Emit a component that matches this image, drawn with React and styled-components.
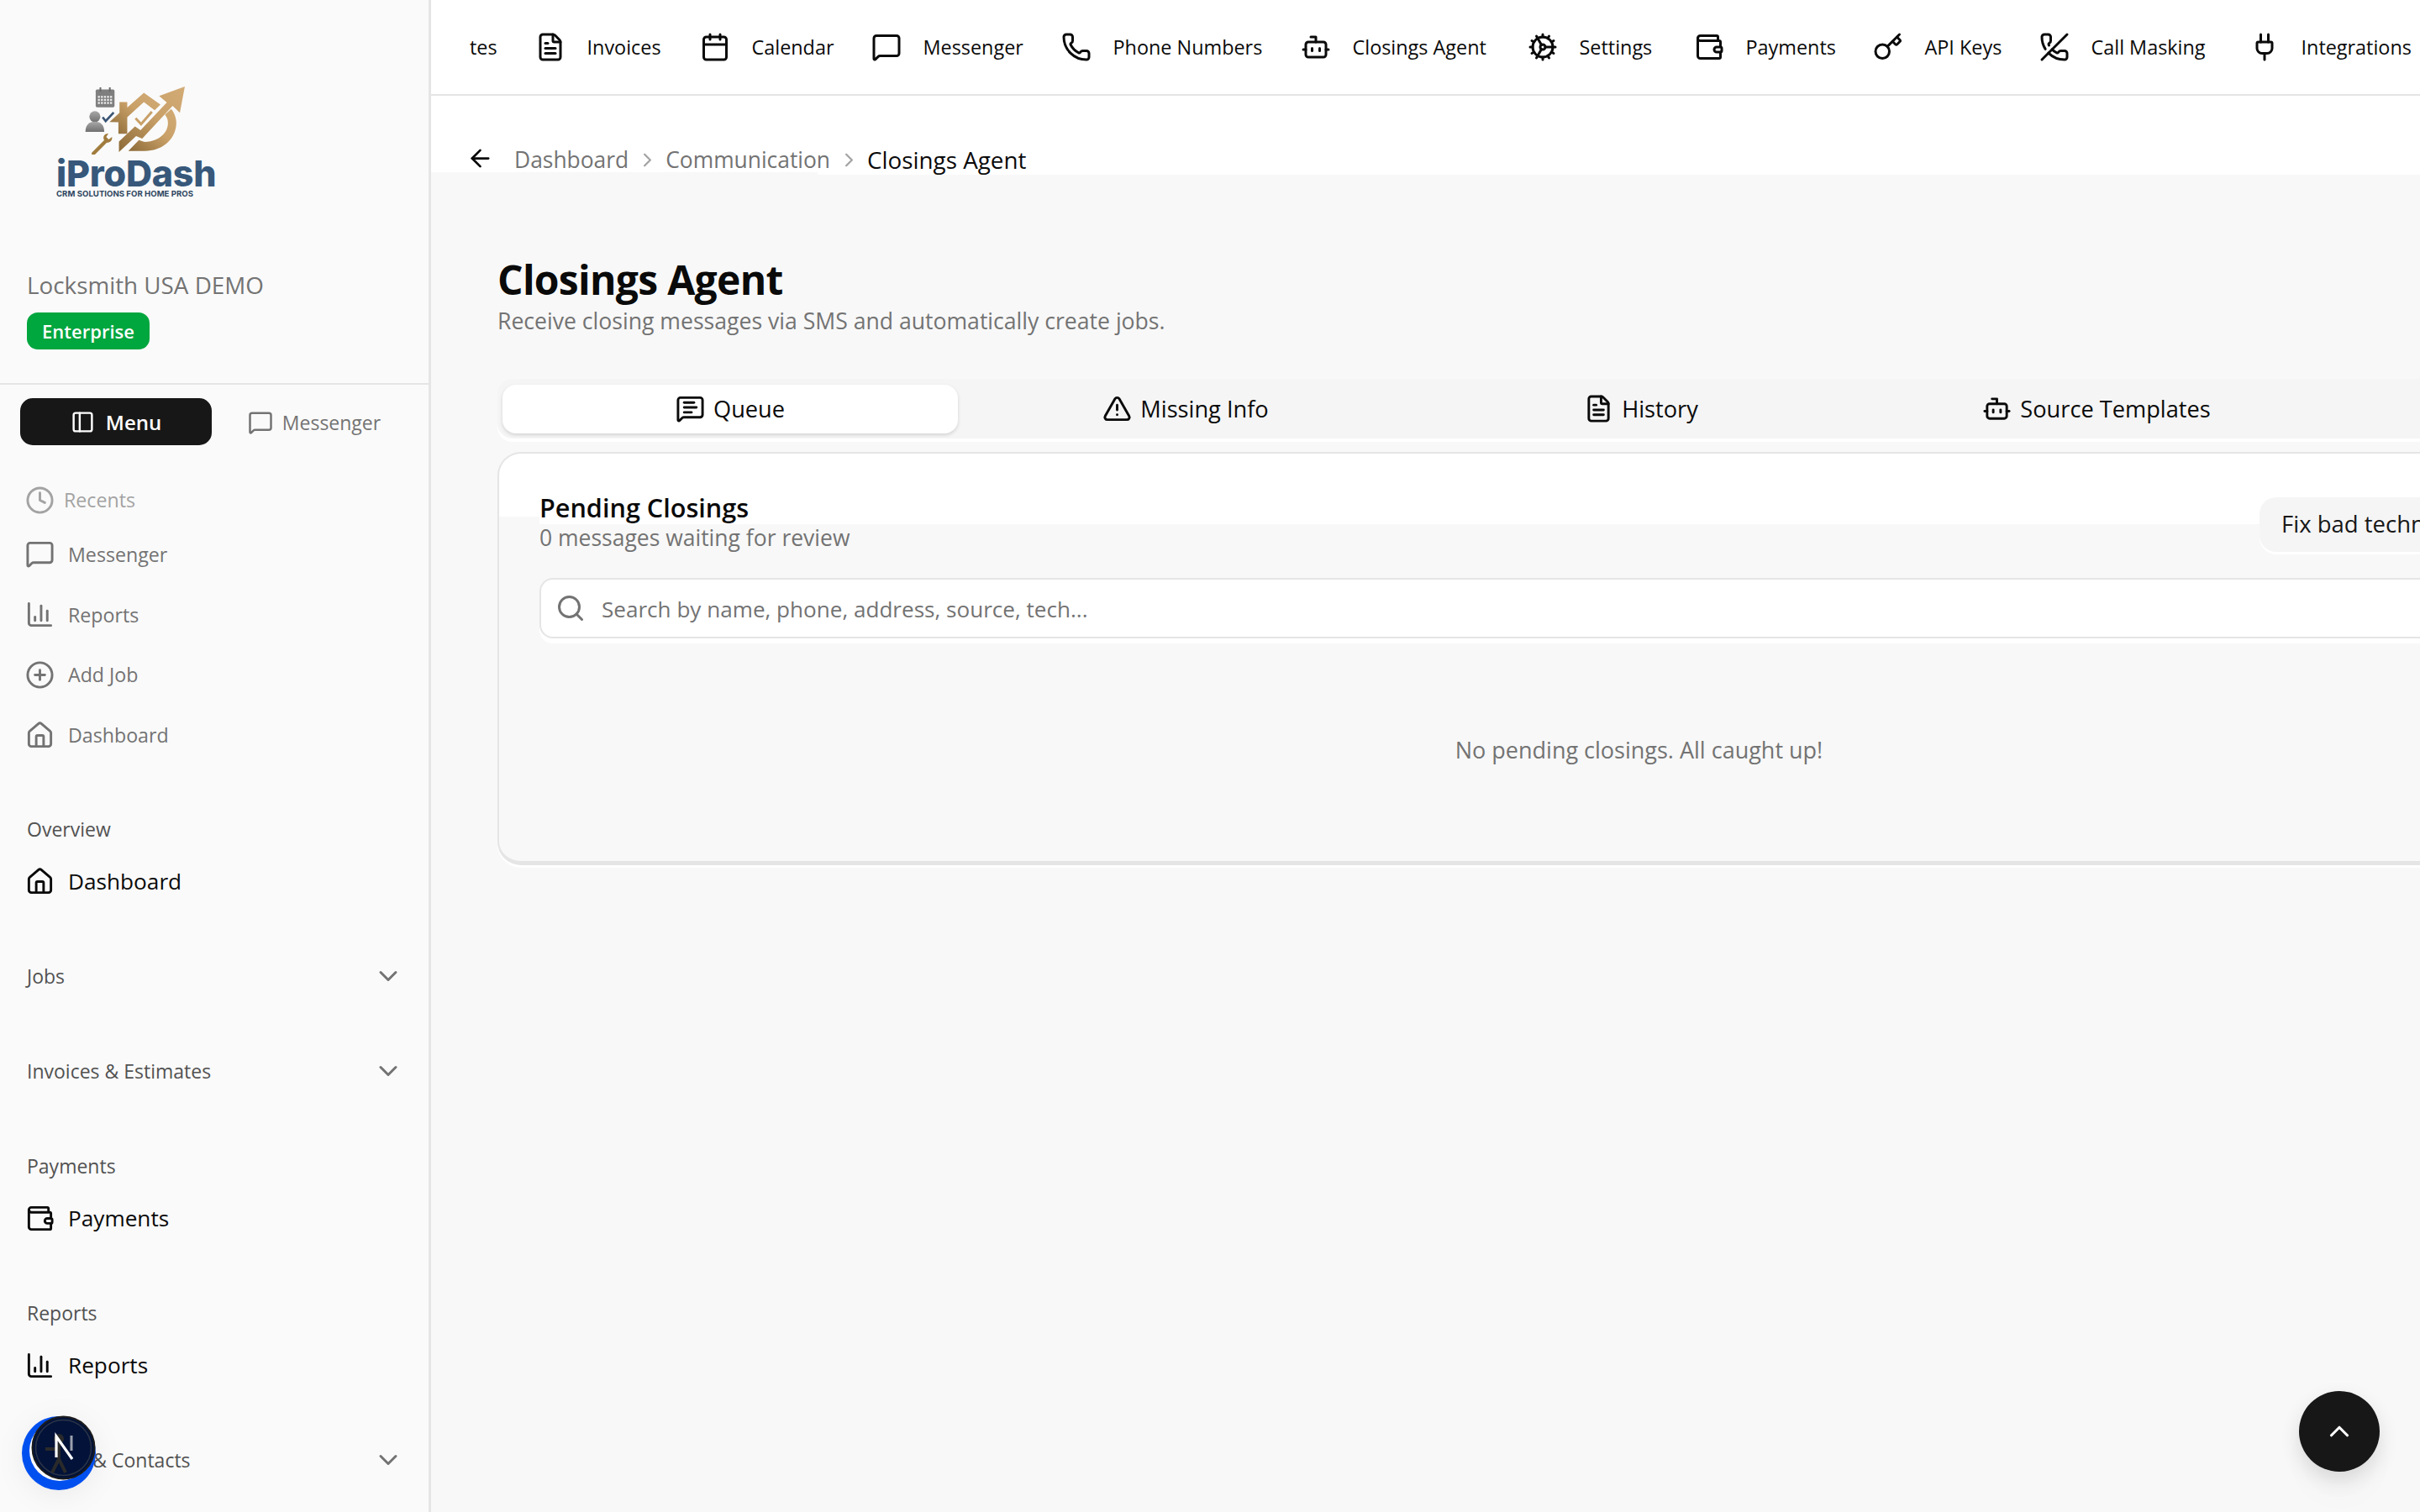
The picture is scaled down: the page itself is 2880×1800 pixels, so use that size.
import React from "react";
import styled, { createGlobalStyle } from "styled-components";
import {
  PanelLeft, MessageSquare, Clock, ChartColumn, CirclePlus, House, Wallet, FileText, Calendar, Phone, Bot, Cog, Key,
  PhoneOff, Plug, TriangleAlert, MessageSquareText, Search, ArrowLeft, ChevronRight, ChevronDown, ChevronUp,
} from "lucide-react";

const FONT = `"Open Sans", "Noto Sans", "Liberation Sans", sans-serif`;

const Global = createGlobalStyle`
  html, body { margin: 0; padding: 0; width: 2880px; height: 1800px; overflow: hidden; background: #f8f8f8; }
  body { font-family: ${FONT}; color: #0a0a0a; }
  * { box-sizing: border-box; }
`;

const Shell = styled.div`
  position: relative; display: flex; width: 2880px; height: 1800px; overflow: hidden;
`;
const Sidebar = styled.aside`
  flex: 0 0 513px; height: 1800px; background: #fafafa; border-right: 3px solid #e5e5e5; overflow: hidden;
`;
const Brand = styled.div`
  height: 458px; border-bottom: 2px solid #e5e5e5; padding: 100px 0 0 32px; display: flex; flex-direction: column;
`;
const Logo = styled.div`
  width: 189px; margin-left: 35px; display: flex; flex-direction: column; align-items: stretch;
`;
const LogoArt = styled.svg`
  display: block; width: 122px; height: 84px; margin-left: 33px;
`;
const LogoName = styled.div`
  font-family: Inter, ${FONT}; font-weight: 800; font-size: 43px; line-height: 36px; height: 36px; letter-spacing: -0.2px;
  white-space: nowrap; margin-top: 4px; color: #37587a;
`;
const LogoTag = styled.div`
  font-family: Inter, ${FONT}; font-weight: 700; font-size: 9.6px; line-height: 14px; letter-spacing: 0.02px; white-space: nowrap; color: #2f4661;
`;
const Company = styled.div`
  margin-top: 82px; margin-bottom: 2px; font-size: 27.8px; line-height: 38px; font-weight: 500; color: #737373; white-space: nowrap;
`;
const Plan = styled.span`
  align-self: flex-start; margin-top: 12px; display: inline-flex; align-items: center; justify-content: center;
  width: 146px; height: 44px; border-radius: 13px; background: #00a63e; color: #fff; font-size: 22px; font-weight: 600;
`;
const Switcher = styled.div`
  display: flex; align-items: center; padding: 16px 0 0 24px;
`;
const SwitchButton = styled.div`
  display: flex; align-items: center; justify-content: center; gap: ${p => (p.$active ? 13 : 11)}px;
  width: ${p => (p.$active ? 228 : 244)}px; height: 56px; padding-top: 1px; border-radius: 15px; font-size: ${p => (p.$active ? 24 : 23)}px; white-space: nowrap;
  font-weight: ${p => (p.$active ? 600 : 500)};
  background: ${p => (p.$active ? "#171717" : "transparent")};
  color: ${p => (p.$active ? "#fff" : "#737373")};
`;
const QuickList = styled.div`
  margin-top: 45px;
`;
const Recents = styled.div`
  display: flex; align-items: center; gap: 11px; height: 40px; padding-left: 30px; color: #a3a3a3; font-size: 23.2px; margin-bottom: 9px;
`;
const QuickRow = styled.div`
  display: flex; align-items: center; gap: 16px; height: 71.8px; padding-left: 30px; color: #737373; font-size: 23.2px;
`;
const Sections = styled.div`
  margin-top: 54px;
`;
const Section = styled.section`
  margin-bottom: 69px;
`;
const SectionLabel = styled.div`
  display: flex; align-items: center; justify-content: space-between; height: 44px; padding: 0 30px 0 32px;
  font-size: 23px; font-weight: 500; color: #525252; white-space: nowrap;
  svg { color: #737373; }
`;
const SectionItem = styled.div`
  display: flex; align-items: center; gap: 16px; height: 44px; margin-top: 18px; padding-left: 30px; font-size: 26.2px; color: #0a0a0a;
`;
const Main = styled.main`
  flex: 1; min-width: 0; display: flex; flex-direction: column; overflow: hidden;
`;
const TopNav = styled.nav`
  flex: 0 0 114px; display: flex; align-items: center; background: #fff; border-bottom: 2px solid #e5e5e5; padding: 0 0 0 46px; white-space: nowrap; overflow: hidden;
`;
const NavItem = styled.div`
  display: flex; flex: 0 0 ${p => p.$w}px; align-items: center; gap: 25.5px; font-size: 23.4px; line-height: 38px; font-weight: 500; color: #0a0a0a;
`;
const Crumbs = styled.div`
  flex: 0 0 94px; display: flex; align-items: flex-start; padding: 58px 0 0 42px; font-size: 26.4px;
  background: linear-gradient(#f8f8f8, #f8f8f8) left bottom / 460px 3px no-repeat, #fff;
`;
const Back = styled.span`
  display: flex; margin-right: 24px; color: #0a0a0a;
`;
const Crumb = styled.span`
  line-height: 36px; height: 36px; color: ${p => (p.$current ? "#0a0a0a" : "#737373")}; font-weight: ${p => (p.$current ? 500 : 400)};
  font-size: ${p => (p.$current ? 27.8 : 26.4)}px;
`;
const CrumbSep = styled.span`
  display: flex; align-items: center; height: 36px; margin: 0 8.5px; color: #a3a3a3;
`;
const Content = styled.div`
  flex: 1; padding: 93px 0 0 79px; background: #f8f8f8;
`;
const Title = styled.h1`
  margin: 0; font-size: 48px; line-height: 64px; font-weight: 700; color: #0a0a0a; letter-spacing: -0.7px;
`;
const Subtitle = styled.p`
  margin: -3px 0 49px; font-size: 26.6px; line-height: 40px; color: #737373;
`;
const TabList = styled.div`
  display: grid; grid-template-columns: repeat(5, 542px); width: 2722px; height: 71px; padding: 7px 6px; background: #f5f5f5; border-radius: 18px 0 0 18px;
  box-shadow: 0 4px 0 #fff; margin-bottom: 16px;
`;
const Tab = styled.div`
  display: flex; align-items: center; justify-content: center; gap: 10px; height: 58px; padding-bottom: 2px; border-radius: 16px; font-size: 27.2px; font-weight: 500; color: #0a0a0a;
  background: ${p => (p.$active ? "#fff" : "transparent")};
  box-shadow: ${p => (p.$active ? "0 2px 4px rgba(0,0,0,.14)" : "none")};
`;
const Card = styled.div`
  width: 2717px; height: 492px; border: 2px solid #e5e5e5; border-bottom-width: 5px; border-radius: 28px; padding: 44px 48px 0;
  background:
    linear-gradient(#f8f8f8, #f8f8f8) left 75px / 48px 12px no-repeat,
    linear-gradient(#fff 84px, #f8f8f8 84px);
  box-shadow: 0 3px 0 #fff;
`;
const CardHead = styled.div`
  display: flex; align-items: flex-start; height: 74px; margin-bottom: 30px;
`;
const CardTitle = styled.h2`
  margin: 0; font-size: 30.6px; line-height: 40px; font-weight: 600; color: #0a0a0a;
`;
const CardSub = styled.p`
  margin: 0; font-size: 26.5px; line-height: 32px; color: #737373;
`;
const HeadAction = styled.button`
  margin: 8px 0 0 auto; width: 570px; height: 65px; border: 0; border-radius: 20px; background: #f5f5f5; box-shadow: 0 3px 0 #fff;
  font: 500 27.5px ${FONT}; color: #171717; text-align: left; padding: 0 0 2px 26px; white-space: nowrap; overflow: hidden;
`;
const SearchBox = styled.div`
  display: flex; align-items: center; gap: 19px; height: 72px; padding: 2px 0 0 17px; border: 2px solid #e5e5e5; border-radius: 16px; background: #fff;
  box-shadow: 0 6px 0 #fff; color: #737373; font-size: 26.1px;
  svg { margin-top: -2px; }
`;
const Empty = styled.div`
  display: flex; align-items: center; justify-content: center; height: 264px; font-size: 27px; color: #737373;
`;
const UpButton = styled.div`
  position: absolute; left: 2736px; top: 1656px; width: 96px; height: 96px; border-radius: 50%; background: #171717; color: #fff;
  display: flex; align-items: center; justify-content: center; box-shadow: 0 10px 24px rgba(0,0,0,.12), 0 34px 40px rgba(0,0,0,.015);
`;
const DevBadge = styled.svg`
  position: absolute; left: 20px; top: 1680px; width: 100px; height: 100px; filter: drop-shadow(0 6px 16px rgba(0,0,0,.06));
`;

const navItems = [
  [null, "tes", 78],
  [FileText, "Invoices", 196],
  [Calendar, "Calendar", 204],
  [MessageSquare, "Messenger", 226],
  [Phone, "Phone Numbers", 285],
  [Bot, "Closings Agent", 270],
  [Cog, "Settings", 198],
  [Wallet, "Payments", 213],
  [Key, "API Keys", 198],
  [PhoneOff, "Call Masking", 250],
  [Plug, "Integrations", 260],
];

const quick = [
  [MessageSquare, "Messenger"],
  [ChartColumn, "Reports"],
  [CirclePlus, "Add Job"],
  [House, "Dashboard"],
];

const sections = [
  ["Overview", House, "Dashboard"],
  ["Jobs"],
  ["Invoices & Estimates"],
  ["Payments", Wallet, "Payments"],
  ["Reports", ChartColumn, "Reports"],
  ["Clients & Contacts"],
];

const tabs = [
  [MessageSquareText, "Queue", true],
  [TriangleAlert, "Missing Info"],
  [FileText, "History"],
  [Bot, "Source Templates"],
];

function LogoMark() {
  const cells = [];
  for (let r = 0; r < 3; r++) for (let c = 0; c < 5; c++) cells.push(<rect key={`${r}-${c}`} x={230 + c * 11} y={103 + r * 11} width="7" height="7" fill="#ececec" />);
  return (
    <LogoArt viewBox="180 60 370 255" aria-hidden="true">
      <defs>
        <linearGradient id="gold" x1="0" y1="1" x2="1" y2="0">
          <stop offset="0" stopColor="#8c6a37" />
          <stop offset=".55" stopColor="#c9a068" />
          <stop offset="1" stopColor="#d2ab76" />
        </linearGradient>
        <linearGradient id="grey" x1="0" y1="0" x2="0" y2="1">
          <stop offset="0" stopColor="#a8a8a8" />
          <stop offset="1" stopColor="#707070" />
        </linearGradient>
      </defs>
      <rect x="222" y="80" width="68" height="64" rx="5" fill="#7f7f7f" />
      <rect x="236" y="72" width="6" height="16" fill="#6a6a6a" />
      <rect x="270" y="72" width="6" height="16" fill="#6a6a6a" />
      {cells}
      <circle cx="219" cy="178" r="20" fill="url(#grey)" />
      <path d="M185 233c0-26 14-37 34-37s34 11 34 37z" fill="url(#grey)" />
      <path d="M247 180l11 14 29-31" fill="none" stroke="#3b5575" strokeWidth="8" />
      <path d="M214 311l46-46" stroke="#a17c3e" strokeWidth="13" strokeLinecap="round" />
      <path d="M252 262c-6-14 4-24 16-23l-8 12 9 9 12-9c2 14-10 24-24 20z" fill="#a17c3e" />
      <path d="M272 197l36-33v-39h28v20l60-53 60 42-21 21-39-30-60 55v60l-32 0v-42z" fill="url(#gold)" />
      <path d="M306 268v38l62-58 22 9 110-118 26 25 18-95-93 34 28 24-95 100-20-14z" fill="url(#gold)" />
      <path d="M340 302l38-39 18 6c42 2 84-24 87-64 1-14-3-24-11-34l23-21c16 20 21 45 17 65-8 50-52 87-112 87z" fill="url(#gold)" />
      <path d="M366 184l20 21 39-45" fill="none" stroke="#c9a068" strokeWidth="9" />
    </LogoArt>
  );
}

export default function App() {
  return (
    <Shell>
      <Global />
      <Sidebar>
        <Brand>
          <Logo>
            <LogoMark />
            <LogoName>iProDash</LogoName>
            <LogoTag>CRM SOLUTIONS FOR HOME PROS</LogoTag>
          </Logo>
          <Company>Locksmith USA DEMO</Company>
          <Plan>Enterprise</Plan>
        </Brand>
        <Switcher>
          <SwitchButton $active><PanelLeft size={29} />Menu</SwitchButton>
          <SwitchButton><MessageSquare size={30} />Messenger</SwitchButton>
        </Switcher>
        <QuickList>
          <Recents><Clock size={35} />Recents</Recents>
          {quick.map(([Icon, label]) => (
            <QuickRow key={label}><Icon size={35} />{label}</QuickRow>
          ))}
        </QuickList>
        <Sections>
          {sections.map(([label, Icon, item]) => (
            <Section key={label}>
              <SectionLabel>
                {label}
                {!Icon && <ChevronDown size={36} />}
              </SectionLabel>
              {Icon && <SectionItem><Icon size={35} />{item}</SectionItem>}
            </Section>
          ))}
        </Sections>
      </Sidebar>
      <Main>
        <TopNav>
          {navItems.map(([Icon, label, w]) => (
            <NavItem key={label} $w={w}>{Icon && <Icon size={36} />}{label}</NavItem>
          ))}
        </TopNav>
        <Crumbs>
          <Back><ArrowLeft size={33} /></Back>
          <Crumb>Dashboard</Crumb>
          <CrumbSep><ChevronRight size={27} /></CrumbSep>
          <Crumb>Communication</Crumb>
          <CrumbSep><ChevronRight size={27} /></CrumbSep>
          <Crumb $current>Closings Agent</Crumb>
        </Crumbs>
        <Content>
          <Title>Closings Agent</Title>
          <Subtitle>Receive closing messages via SMS and automatically create jobs.</Subtitle>
          <TabList>
            {tabs.map(([Icon, label, active]) => (
              <Tab key={label} $active={active}><Icon size={35} />{label}</Tab>
            ))}
          </TabList>
          <Card>
            <CardHead>
              <div>
                <CardTitle>Pending Closings</CardTitle>
                <CardSub>0 messages waiting for review</CardSub>
              </div>
              <HeadAction>Fix bad technician assignments</HeadAction>
            </CardHead>
            <SearchBox><Search size={36} />Search by name, phone, address, source, tech...</SearchBox>
            <Empty>No pending closings. All caught up!</Empty>
          </Card>
        </Content>
      </Main>
      <DevBadge viewBox="0 0 100 100" aria-hidden="true">
        <circle cx="50" cy="50" r="44" fill="#0050f0" />
        <circle cx="51" cy="47" r="36" fill="#fff" />
        <circle cx="55.5" cy="43.5" r="37" fill="#021238" stroke="#1c1c1c" strokeWidth="2" />
        <circle cx="55.5" cy="43.5" r="33" fill="none" stroke="#2c3548" strokeWidth="1.5" />
        <circle cx="50" cy="33" r="6" fill="#2a2a2a" />
        <path d="M34 45h13M50 39v18l-8 16M50 57l8 16" fill="none" stroke="#2a2a2a" strokeWidth="4" />
        <path d="M47 55V30l19 27" fill="none" stroke="#fff" strokeWidth="3.2" />
        <path d="M65 29v18" fill="none" stroke="#9aa0ad" strokeWidth="3" />
      </DevBadge>
      <UpButton><ChevronUp size={38} /></UpButton>
    </Shell>
  );
}
